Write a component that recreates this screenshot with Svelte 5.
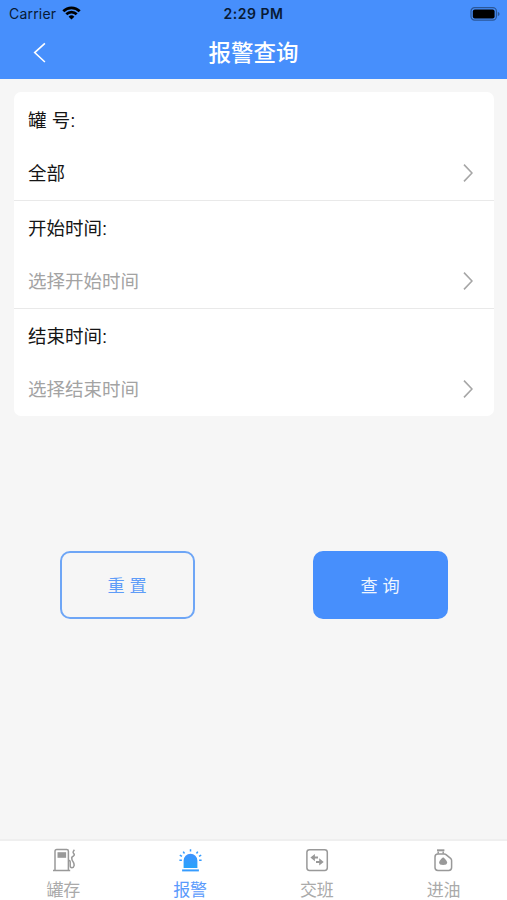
<script lang="ts">
	interface Field {
		label: string;
		value?: string;
		placeholder?: string;
	}

	const fields: Field[] = [
		{ label: '罐 号:', value: '全部' },
		{ label: '开始时间:', placeholder: '选择开始时间' },
		{ label: '结束时间:', placeholder: '选择结束时间' }
	];

	const tabs = [
		{ id: 'tank', label: '罐存' },
		{ id: 'alarm', label: '报警' },
		{ id: 'shift', label: '交班' },
		{ id: 'oil', label: '进油' }
	];

	let active = $state('alarm');
</script>

<div class="page">
	<header>
		<div class="status">
			<div class="carrier">
				<span>Carrier</span>
				<svg width="19" height="14" viewBox="0 0 19 14">
					<path d="M1.3 5.2a11.6 11.6 0 0 1 16.4 0" />
					<path d="M4.3 8.2a7.4 7.4 0 0 1 10.4 0" />
					<path class="dot" d="M6.6 10.7a4.1 4.1 0 0 1 5.8 0L9.5 13.6z" />
				</svg>
			</div>
			<span class="time">2:29 PM</span>
			<svg class="battery" width="31" height="14" viewBox="0 0 31 14">
				<rect class="case" x="1" y="0.7" width="25.4" height="12.4" rx="3.6" />
				<rect x="2.8" y="2.4" width="21.8" height="9" rx="2" />
				<path class="cap" d="M27.8 4.8v4.4q1.8-.7 1.8-2.2t-1.8-2.2z" />
			</svg>
		</div>
		<div class="nav">
			<button class="back" aria-label="返回">
				<svg width="13" height="22" viewBox="0 0 13 22"><path d="M11.9 1.4L1.7 10.6l10.2 9.4" /></svg>
			</button>
			<h1>报警查询</h1>
		</div>
	</header>

	<main>
		<section class="card">
			{#each fields as field}
				<div class="field">
					<div class="line">{field.label}</div>
					<div class="line picker" class:empty={!field.value}>
						<span>{field.value ?? field.placeholder}</span>
						<svg width="10" height="18" viewBox="0 0 10 18"><path d="M1 .6L9 9 1 17.4" /></svg>
					</div>
				</div>
			{/each}
		</section>

		<div class="actions">
			<button class="reset">重 置</button>
			<button class="query">查 询</button>
		</div>
	</main>

	<nav class="tabs">
		{#each tabs as tab}
			<button class="tab" class:active={active === tab.id} onclick={() => (active = tab.id)}>
				<svg width="24" height="24" viewBox="0 0 24 24">
					{#if tab.id === 'tank'}
						<path d="M4 22V3.3q0-1.7 1.7-1.7h10q1.7 0 1.7 1.7V22M2 22.5h17.2" />
						<path class="solid" d="M6.5 4.2h8.6v5.6H6.5z" />
						<path d="M17.4 12.2q1.8 0 1.8 2v3.6q0 2 1.7 2t2.2-2.2q.2-2-1.1-3.9-1.7-2.4-1-4.6l1.9-1.6q.9-1.2-.4-2.2-1.1-1.1.9-3.5M22.6 8l-2.4 1.6" />
					{:else if tab.id === 'alarm'}
						<defs>
							<linearGradient id="lamp" x1="0" y1="0" x2="0" y2="1">
								<stop offset="0" stop-color="#3f93ff" />
								<stop offset="1" stop-color="#27a3fb" />
							</linearGradient>
						</defs>
						<path fill="url(#lamp)" stroke="none" d="M5.6 20.1v-7.4a6.9 6.9 0 0 1 13.8 0v7.4z" />
						<path class="base" d="M4.1 22.4h16.8" />
						<path d="M12.5 1.2v2.4M5.2 3.6l1.3 1.9M19.8 3.6l-1.3 1.9M1.8 7.1l2.2 1.2M23.2 7.1L21 8.3M1.4 12.2h2.5M21.1 12.2h2.5" />
					{:else if tab.id === 'shift'}
						<rect x="1.9" y="1.7" width="20.4" height="20.7" rx="2.6" />
						<path class="arrow" d="M13 9.6H7M11 13.9h6" />
						<path class="solid" d="M9.9 6v7.2L5.4 9.6zM14.2 10.3v7.2l4.5-3.6z" />
					{:else}
						<path d="M5.9 6h6.4q1 0 1.7.6l4.6 3.8q1 .9 1 2v7.1q0 2.9-2.9 2.9H5.9Q3 22.400 3 19.500V8.900Q3 6 5.900 6z" />
						<path class="base" d="M5 2.3h7.4" />
						<path d="M6.200 3.500v2.300M11.200 3.500v2.300" />
						<path class="solid" d="M11.100 9.300q4 3.200 4 5.200 0 2.500-4 2.500t-4-2.500q0-2 4-5.200z" />
					{/if}
				</svg>
				<span>{tab.label}</span>
			</button>
		{/each}
	</nav>
</div>

<style>
	:global(body) {
		margin: 0;
	}

	.page {
		display: flex;
		flex-direction: column;
		height: 900px;
		background: #f6f6f6;
		color: #151515;
		font-family: 'Liberation Sans', 'Noto Sans CJK SC', sans-serif;
	}

	svg {
		display: block;
		flex: none;
		fill: none;
		stroke: currentColor;
	}

	button {
		padding: 0;
		border: 0;
		background: none;
		font-family: inherit;
		cursor: pointer;
	}

	header {
		height: 79px;
		background: #478ffc;
	}

	.status {
		display: grid;
		grid-template-columns: 1fr auto 1fr;
		align-items: center;
		height: 27px;
		padding: 0 6px 0 9px;
		box-sizing: border-box;
		color: #081a35;
		font-family: Inter, sans-serif;
		font-size: 14px;
	}
	.carrier {
		display: flex;
		align-items: center;
		gap: 6px;
		letter-spacing: 0.2px;
	}
	.carrier svg {
		margin-bottom: 2px;
		color: #000;
		stroke-width: 2.7;
	}
	.carrier .dot {
		fill: #000;
		stroke: none;
	}
	.time {
		margin-right: 3px;
		font-weight: 600;
		letter-spacing: 0.5px;
	}
	.battery {
		justify-self: end;
	}
	.battery rect {
		fill: #000;
		stroke: none;
	}
	.battery .case {
		fill: none;
		stroke: #2b5798;
		stroke-width: 1.2;
	}
	.battery .cap {
		fill: #2b5798;
		stroke: none;
	}

	.nav {
		display: grid;
		grid-template-columns: 1fr auto 1fr;
		align-items: center;
		height: 51px;
		color: #fff;
	}
	.back {
		justify-self: start;
		padding-left: 33px;
		color: #fff;
	}
	.back svg {
		stroke-width: 1.6;
	}
	h1 {
		margin: 0;
		padding-top: 2px;
		font-size: 22.5px;
		font-weight: 500;
		line-height: 50px;
	}

	main {
		flex: 1;
		padding: 13px 13px 0 14px;
	}
	.card {
		overflow: hidden;
		border-radius: 7px;
		background: #fff;
	}
	.field {
		box-sizing: border-box;
		height: 108px;
		padding: 0 21px 0 14px;
		font-size: 18.5px;
	}
	.field + .field {
		border-top: 1.5px solid #e9e9e9;
	}
	.field + .field .line:first-child {
		margin-top: -1px;
	}
	.line {
		height: 54px;
		line-height: 57px;
	}
	.picker {
		display: flex;
		align-items: center;
		justify-content: space-between;
	}
	.picker svg {
		color: #a6a6a6;
		stroke-width: 1.6;
	}
	.picker span {
		padding-top: 1px;
	}
	.empty {
		color: #a3a3a3;
	}

	.actions {
		display: flex;
		justify-content: space-between;
		padding: 135px 46px 0;
	}
	.actions button {
		box-sizing: border-box;
		width: 135px;
		height: 68px;
		padding: 0 1px 2px 0;
		border-radius: 10px;
		font-size: 17.2px;
	}
	.reset {
		border: 2px solid #6ea6f6;
		color: #5e9cf8;
	}
	.query {
		background: #478ffc;
		color: #eef5ff;
	}

	.tabs {
		display: flex;
		height: 61px;
		border-top: 2px solid #efefef;
		box-sizing: border-box;
		background: #fff;
	}
	.tab {
		display: flex;
		flex: 1;
		flex-direction: column;
		align-items: center;
		justify-content: flex-start;
		padding-top: 7px;
		color: #999;
	}
	.tab svg {
		stroke-width: 1.5;
	}
	.tab .solid {
		fill: currentColor;
		stroke: none;
	}
	.tab .base,
	.tab .arrow {
		stroke-width: 2;
	}
	.tab span {
		margin-top: 6px;
		color: #aaa;
		font-size: 17px;
		line-height: 26px;
	}
	.active svg {
		color: #369cff;
	}
	.tab.active span {
		color: #5a9afc;
	}
</style>
